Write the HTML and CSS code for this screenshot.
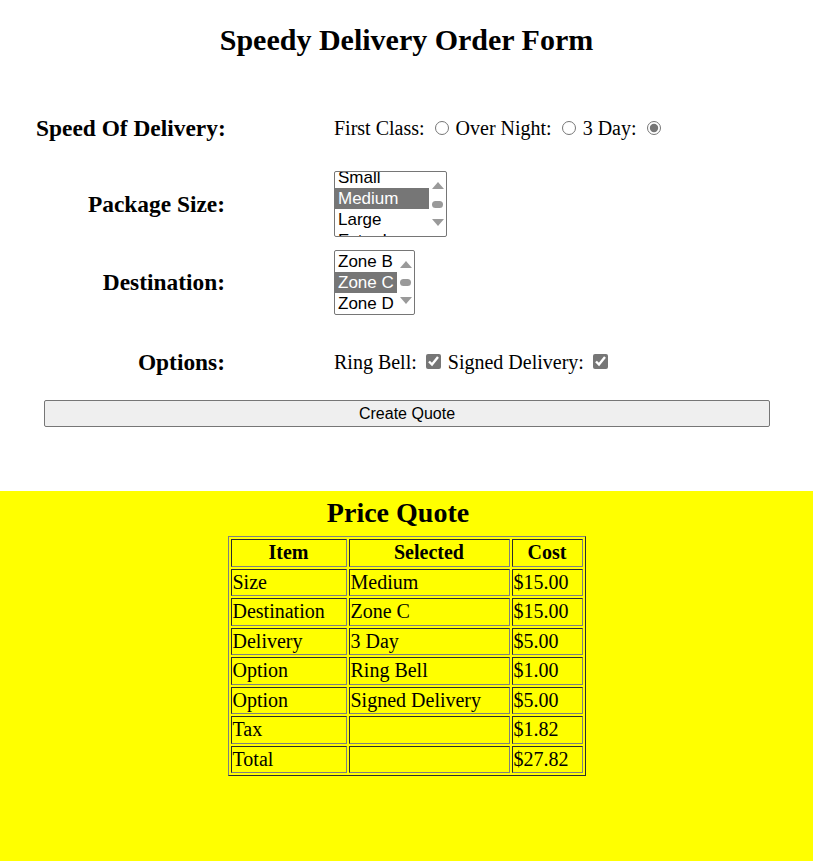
FILE: index.html
```html
<!DOCTYPE html>
<html lang="en">
<head>
<meta charset="utf-8">
<title>Speedy Delivery Order Form</title>
<link rel="stylesheet" href="styles.css">
</head>
<body>
<section class="order">
  <h2 class="title">Speedy Delivery Order Form</h2>
  <form class="form">
    <div class="row row-speed">
      <h3 class="label">Speed Of Delivery:</h3>
      <div class="control">First Class: <input type="radio" name="speed"> Over Night: <input type="radio" name="speed"> 3 Day: <input type="radio" name="speed" checked></div>
    </div>
    <div class="row row-size">
      <h3 class="label">Package Size:</h3>
      <div class="control">
        <div class="listbox listbox-size">
          <div class="options options-size">
            <div class="option">Small</div>
            <div class="option selected">Medium</div>
            <div class="option">Large</div>
            <div class="option">Extra Large</div>
          </div>
          <div class="scrollbar">
            <span class="arrow-up"></span>
            <span class="thumb"></span>
            <span class="arrow-down"></span>
          </div>
        </div>
      </div>
    </div>
    <div class="row row-dest">
      <h3 class="label">Destination:</h3>
      <div class="control">
        <div class="listbox listbox-dest">
          <div class="options">
            <div class="option">Zone B</div>
            <div class="option selected">Zone C</div>
            <div class="option">Zone D</div>
          </div>
          <div class="scrollbar">
            <span class="arrow-up"></span>
            <span class="thumb"></span>
            <span class="arrow-down"></span>
          </div>
        </div>
      </div>
    </div>
    <div class="row row-options">
      <h3 class="label">Options:</h3>
      <div class="control">Ring Bell: <input type="checkbox" checked> Signed Delivery: <input type="checkbox" checked></div>
    </div>
    <button type="button" class="quote-btn">Create Quote</button>
  </form>
</section>
<section class="quote">
  <h2 class="quote-title">Price Quote</h2>
  <table class="quote-table">
    <tr><th class="c1">Item</th><th class="c2">Selected</th><th class="c3">Cost</th></tr>
    <tr><td>Size</td><td>Medium</td><td>$15.00</td></tr>
    <tr><td>Destination</td><td>Zone C</td><td>$15.00</td></tr>
    <tr><td>Delivery</td><td>3 Day</td><td>$5.00</td></tr>
    <tr><td>Option</td><td>Ring Bell</td><td>$1.00</td></tr>
    <tr><td>Option</td><td>Signed Delivery</td><td>$5.00</td></tr>
    <tr><td>Tax</td><td></td><td>$1.82</td></tr>
    <tr><td>Total</td><td></td><td>$27.82</td></tr>
  </table>
</section>
</body>
</html>
```
FILE: styles.css
```css
html, body {
  margin: 0;
  padding: 0;
  background: #fff;
}
body {
  font-family: "Liberation Serif", "Times New Roman", serif;
  font-size: 20px;
  color: #000;
}
.order {
  padding: 22px 0 64px;
}
.title {
  margin: 0;
  font-size: 30px;
  line-height: 35px;
  text-align: center;
  font-weight: bold;
}
.form {
  margin: 51px 0 0 36px;
  width: 734px;
}
.row {
  display: grid;
  grid-template-columns: 189px 1fr;
  column-gap: 109px;
  align-items: center;
}
.label {
  margin: 0;
  font-size: 23.4px;
  font-weight: bold;
  text-align: right;
  white-space: nowrap;
}
.control {
  white-space: nowrap;
}
.row-speed { height: 40px; }
.row-size { margin-top: 23px; height: 66px; }
.row-dest { margin-top: 13px; height: 65px; }
.row-options { margin-top: 27px; height: 40px; }
.control input {
  accent-color: #767676;
}
.control input[type="radio"] {
  width: 14px;
  height: 14px;
  margin: 2px 2px 0 5px;
}
.control input[type="checkbox"] {
  width: 15px;
  height: 15px;
  margin: 2px 2px 0 4px;
}
.listbox {
  display: flex;
  border: 1px solid #767676;
  border-radius: 2px;
  background: #fff;
  overflow: hidden;
  font-family: "Liberation Sans", Arial, sans-serif;
  font-size: 17px;
}
.listbox-size { width: 111px; height: 64px; }
.listbox-dest { width: 79px; height: 63px; }
.options {
  flex: 1;
  overflow: hidden;
  display: flex;
  flex-direction: column;
}
.options-size { margin-top: -5px; }
.option {
  flex: none;
  height: 21px;
  line-height: 21px;
  padding: 0 3px;
  white-space: nowrap;
}
.option.selected {
  background: #767676;
  color: #fff;
}
.scrollbar {
  width: 17px;
  flex: none;
  display: flex;
  flex-direction: column;
  align-items: center;
  justify-content: space-between;
  padding: 10px 0;
}
.arrow-up {
  width: 0; height: 0;
  border-left: 6px solid transparent;
  border-right: 6px solid transparent;
  border-bottom: 7px solid #9a9a9a;
}
.arrow-down {
  width: 0; height: 0;
  border-left: 6px solid transparent;
  border-right: 6px solid transparent;
  border-top: 7px solid #9a9a9a;
}
.thumb {
  width: 11px;
  height: 7px;
  border-radius: 4px;
  background: #9a9a9a;
}
.quote-btn {
  display: block;
  width: 726px;
  height: 27px;
  margin: 18px 0 0 8px;
  font-family: "Liberation Sans", Arial, sans-serif;
  font-size: 16px;
  background: #efefef;
  border: 1px solid #767676;
  border-radius: 2px;
  color: #000;
  padding: 0;
}
.quote {
  background: #ffff00;
  min-height: 370px;
  padding-top: 6px;
}
.quote-title {
  margin: 0 0 7px;
  padding-right: 17px;
  font-size: 28px;
  line-height: 32px;
  text-align: center;
}
.quote-table {
  margin: 0 auto;
  border: 1px outset grey;
  border-spacing: 2px;
  width: 358px;
}
.quote-table th,
.quote-table td {
  border: 1px inset grey;
  padding: 1px;
  text-align: left;
  line-height: 23.5px;
}
.quote-table th { text-align: center; }
.c1 { width: 112px; }
.c2 { width: 157px; }
```
